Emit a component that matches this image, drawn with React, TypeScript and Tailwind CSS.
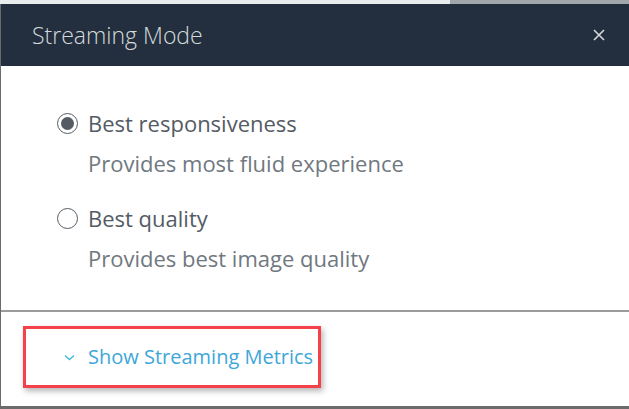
const Radio = ({ checked }: { checked?: boolean }) => (
  <span className="flex h-[21px] w-[21px] shrink-0 items-center justify-center rounded-full border border-[#545b64] bg-white">
    {checked && <span className="h-[13px] w-[13px] rounded-full bg-[#545b64]" />}
  </span>
);

const Option = ({ label, hint, checked }: { label: string; hint: string; checked?: boolean }) => (
  <div className="flex flex-col">
    <div className="flex items-center gap-[10px]">
      <Radio checked={checked} />
      <span className="text-[22px] leading-[28px] text-[#545b64]">{label}</span>
    </div>
    <p className="mt-[12px] pl-[31px] text-[22px] leading-[28px] text-[#707880]">{hint}</p>
  </div>
);

const App = () => {
  return (
    <div className="flex h-[409px] w-[629px] flex-col overflow-hidden bg-white font-['Open_Sans',sans-serif]">
      <div className="flex h-[4px] shrink-0">
        <div className="flex-1 bg-[#eaeded]" />
        <div className="w-[179px] bg-[#a2a7ab]" />
      </div>

      <div className="flex flex-1 flex-col border-b-[3px] border-l border-[#6b6b6b]">
        <header className="flex h-[62px] shrink-0 items-center justify-between bg-[#232f3e] pl-[31px] pr-[24px]">
          <h2 className="text-[23px] font-light text-[#d5dbdb]">Streaming Mode</h2>
          <svg width="12" height="12" viewBox="0 0 12 12" className="text-[#d5dbdb]">
            <path d="M1 1L11 11M11 1L1 11" stroke="currentColor" strokeWidth="1.6" />
          </svg>
        </header>

        <div className="flex flex-col gap-[27px] px-[56px] pt-[43px] pb-[38px]">
          <Option checked label="Best responsiveness" hint="Provides most fluid experience" />
          <Option label="Best quality" hint="Provides best image quality" />
        </div>

        <div className="border-t-2 border-[#9b9b9b] px-[22px] pt-[14px]">
          <div className="flex h-[62px] w-[298px] items-center gap-[13px] border-[3px] border-[#f5424a] pl-[38px] shadow-[2px_3px_6px_rgba(0,0,0,0.3)]">
            <svg width="11" height="7" viewBox="0 0 11 7" className="text-[#44b9d6]">
              <path d="M1 1.5L5.5 5.5L10 1.5" fill="none" stroke="currentColor" strokeWidth="1.4" />
            </svg>
            <span className="text-[20px] text-[#3ea7d9]">Show Streaming Metrics</span>
          </div>
        </div>
      </div>
    </div>
  );
};

export default App;
